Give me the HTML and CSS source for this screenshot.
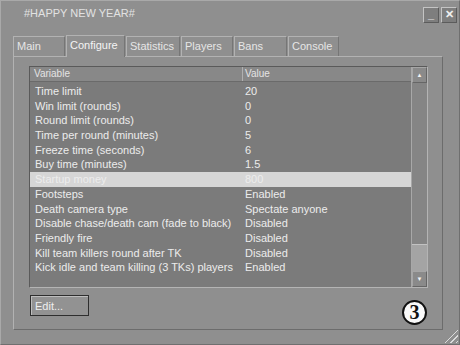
FILE: index.html
```html
<!DOCTYPE html>
<html lang="en">
<head>
    <title>#HAPPY NEW YEAR#</title>
    <link rel="stylesheet" href="styles.css">
</head>
<body>
    <div class="window">
        <div class="titlebar">
            <span class="title">#HAPPY NEW YEAR#</span>
            <div class="win-btns">
                <span class="win-btn">_</span>
                <span class="win-btn">&#x2715;</span>
            </div>
        </div>

        <div class="tabs">
            <div class="tab">Main</div>
            <div class="tab active">Configure</div>
            <div class="tab">Statistics</div>
            <div class="tab">Players</div>
            <div class="tab">Bans</div>
            <div class="tab">Console</div>
        </div>

        <div class="panel">
            <div class="list">
                <div class="list-body">
                    <div class="list-head">
                        <div class="col-var">Variable</div>
                        <div class="col-val">Value</div>
                    </div>
                    <div class="rows">
                        <div class="row"><div class="col-var">Time limit</div><div class="col-val">20</div></div>
                        <div class="row"><div class="col-var">Win limit (rounds)</div><div class="col-val">0</div></div>
                        <div class="row"><div class="col-var">Round limit (rounds)</div><div class="col-val">0</div></div>
                        <div class="row"><div class="col-var">Time per round (minutes)</div><div class="col-val">5</div></div>
                        <div class="row"><div class="col-var">Freeze time (seconds)</div><div class="col-val">6</div></div>
                        <div class="row"><div class="col-var">Buy time (minutes)</div><div class="col-val">1.5</div></div>
                        <div class="row selected"><div class="col-var">Startup money</div><div class="col-val">800</div></div>
                        <div class="row"><div class="col-var">Footsteps</div><div class="col-val">Enabled</div></div>
                        <div class="row"><div class="col-var">Death camera type</div><div class="col-val">Spectate anyone</div></div>
                        <div class="row"><div class="col-var">Disable chase/death cam (fade to black)</div><div class="col-val">Disabled</div></div>
                        <div class="row"><div class="col-var">Friendly fire</div><div class="col-val">Disabled</div></div>
                        <div class="row"><div class="col-var">Kill team killers round after TK</div><div class="col-val">Disabled</div></div>
                        <div class="row"><div class="col-var">Kick idle and team killing (3 TKs) players</div><div class="col-val">Enabled</div></div>
                    </div>
                </div>
                <div class="scrollbar">
                    <div class="sb-btn">&#9650;</div>
                    <div class="sb-track"></div>
                    <div class="sb-thumb"></div>
                    <div class="sb-btn">&#9660;</div>
                </div>
            </div>
            <button class="edit-btn">Edit...</button>
        </div>

        <div class="grip"></div>
        <div class="mark">3</div>
    </div>
</body>
</html>
```

FILE: styles.css
```css
body {
    margin: 0;
    font-family: "Liberation Sans", Arial, sans-serif;
    font-size: 11px;
    background-color: #8f8f8f;
}

.window {
    position: relative;
    width: 458px;
    height: 343px;
    background-color: #8f8f8f;
    border: 1px solid #a9a9a9;
    border-right-color: #6f6f6f;
    border-bottom-color: #6f6f6f;
    color: #ececec;
}

.titlebar {
    display: flex;
    justify-content: space-between;
    height: 33px;
    padding: 0 2px 0 23px;
}

.title {
    margin-top: 6px;
    color: #e2e2e2;
}

.win-btns {
    display: flex;
    gap: 2px;
    margin-top: 6px;
}

.win-btn {
    width: 14px;
    height: 14px;
    border: 1px solid #c4c4c4;
    border-right-color: #5c5c5c;
    border-bottom-color: #5c5c5c;
    background-color: #7e7e7e;
    color: #f0f0f0;
    font-size: 11px;
    line-height: 13px;
    text-align: center;
    font-weight: bold;
}

.tabs {
    display: flex;
    align-items: flex-end;
    height: 22px;
    padding-left: 12px;
}

.tab {
    height: 19px;
    line-height: 18px;
    padding: 0 6px 0 3px;
    margin-right: 1px;
    border: 1px solid #b2b2b2;
    border-bottom: none;
    border-right-color: #767676;
    color: #e6e6e6;
}

.tab:nth-child(1) { width: 41px; }
.tab:nth-child(2) { width: 48px; }
.tab:nth-child(3) { width: 43px; }
.tab:nth-child(4) { width: 41px; }
.tab:nth-child(5) { width: 42px; }
.tab:nth-child(6) { width: 40px; }

.tab.active {
    height: 21px;
    color: #f4f4f4;
    background-color: #8f8f8f;
    position: relative;
    top: 1px;
}

.panel {
    height: 263px;
    margin: 0 16px 0 12px;
    padding: 9px 14px 0 15px;
    border: 1px solid #b2b2b2;
    border-right-color: #6c6c6c;
    border-bottom-color: #6c6c6c;
}

.list {
    display: flex;
    height: 220px;
    border: 1px solid #5a5a5a;
    border-right-color: #b4b4b4;
    border-bottom-color: #b4b4b4;
    background-color: #7b7b7b;
}

.list-body {
    flex: 1;
}

.list-head {
    display: flex;
    height: 14px;
    line-height: 14px;
    background-color: #888888;
    border-bottom: 1px solid #6a6a6a;
    font-size: 10px;
    color: #e4e4e4;
}

.list-head .col-var {
    width: 208px;
    padding-left: 4px;
    border-right: 1px solid #b0b0b0;
}

.list-head .col-val {
    padding-left: 2px;
}

.rows {
    padding-top: 2px;
}

.row {
    display: flex;
    height: 14.7px;
    line-height: 14.7px;
    font-size: 11px;
}

.row .col-var {
    width: 210px;
    padding-left: 5px;
}

.row.selected {
    background-color: #d6d6d6;
    color: #ededed;
}

.scrollbar {
    display: flex;
    flex-direction: column;
    width: 15px;
    border-left: 1px solid #a8a8a8;
    background-color: #858585;
}

.sb-btn {
    height: 14px;
    font-size: 6px;
    line-height: 14px;
    text-align: center;
    color: #f4f4f4;
    border: 1px solid #a6a6a6;
    border-right-color: #666666;
    border-bottom-color: #666666;
    background-color: #8a8a8a;
}

.sb-track {
    flex: 1;
}

.sb-thumb {
    height: 26px;
    background-color: #a4a4a4;
    border-top: 1px solid #c2c2c2;
}

.edit-btn {
    display: block;
    width: 59px;
    height: 21px;
    margin-top: 7px;
    margin-left: 1px;
    padding: 0 0 0 4px;
    text-align: left;
    font-family: "Liberation Sans", Arial, sans-serif;
    font-size: 11px;
    color: #efefef;
    background-color: #929292;
    border: 1px solid #2e2e2e;
    box-shadow: inset 1px 1px 0 #bdbdbd;
}

.grip {
    position: absolute;
    right: 1px;
    bottom: 1px;
    width: 14px;
    height: 14px;
    background: repeating-linear-gradient(135deg, transparent 0 2px, #dcdcdc 2px 3px, transparent 3px 4px);
    clip-path: polygon(100% 0, 100% 100%, 0 100%);
}

.mark {
    position: absolute;
    left: 401px;
    top: 299px;
    width: 21px;
    height: 21px;
    border: 2px solid #111;
    border-radius: 50%;
    background-color: #fafafa;
    color: #111;
    font-family: "Liberation Serif", serif;
    font-size: 20px;
    font-weight: bold;
    line-height: 21px;
    text-align: center;
}
```
